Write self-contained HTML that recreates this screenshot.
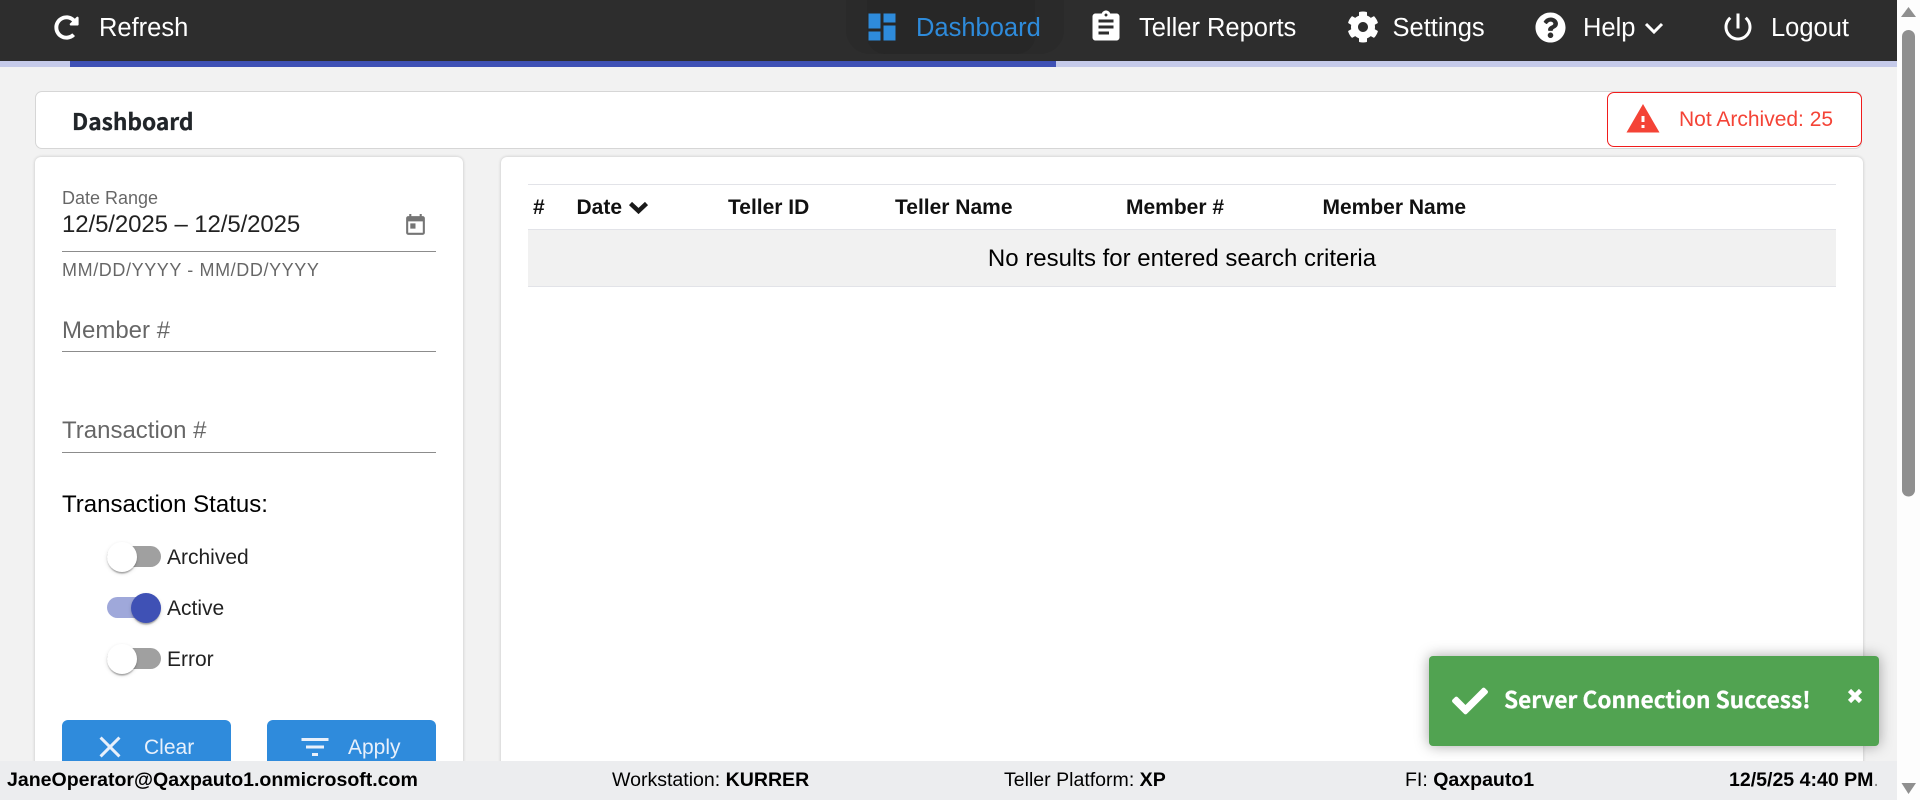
<!DOCTYPE html>
<html lang="en"><head><meta charset="utf-8"><title>Dashboard</title>
<style>
html,body{margin:0;padding:0;width:1920px;height:800px;overflow:hidden;background:#f2f2f2}
body{position:relative;font-family:"Liberation Sans",Arial,sans-serif}
.a{position:absolute}
.t{position:absolute;white-space:nowrap;line-height:normal}
svg{position:absolute;display:block}
.nav{font-size:25.5px;color:#fff;top:14px}
.card{position:absolute;background:#fff;border-radius:6px;box-shadow:0 0 3px rgba(0,0,0,.2)}
.lbl{color:rgba(0,0,0,.6)}
.line{position:absolute;left:62px;width:374px;height:1px;background:#8c8c8c}
.th{font-size:21px;font-weight:700;color:#111;top:196px}
.sw{font-size:21px;color:rgba(0,0,0,.87);left:167px}
.track{position:absolute;left:107px;width:54px;height:21px;border-radius:11px;background:#a0a0a0}
.thumb{position:absolute;width:30px;height:30px;border-radius:50%;background:#fff;box-shadow:0 3px 1.5px -1.5px rgba(0,0,0,.2),0 1.5px 1.5px 0 rgba(0,0,0,.14),0 1.5px 4.5px 0 rgba(0,0,0,.12)}
.btn{position:absolute;top:720px;height:60px;width:169px;background:#2f8bdc;border-radius:6px 6px 0 0}
.bt{font-size:21px;color:#e8f0fb;top:736px}
.ft{font-size:19.55px;color:#000;top:769px}
.ft b{font-weight:700}
</style></head><body>

<!-- nav -->
<div class="a" style="left:0;top:0;width:1897px;height:61px;background:#2d2d2d"></div>
<div class="a" style="left:846px;top:0;width:218px;height:54px;background:#2a2a2a;border-radius:0 0 24px 24px"></div>
<div class="a" style="left:867px;top:0;width:168px;height:54px;background:#272727;border-radius:0 0 18px 18px"></div>

<svg style="left:54px;top:14.5px" width="25" height="25" viewBox="0 0 512 512" fill="#fff"><path d="M256.455 8c66.269.119 126.437 26.233 170.859 68.685l35.715-35.715C478.149 25.851 504 36.559 504 57.941V192c0 13.255-10.745 24-24 24H345.941c-21.382 0-32.09-25.851-16.971-40.971l41.75-41.75c-30.864-28.899-70.801-44.907-113.23-45.273-92.398-.798-170.283 73.977-169.484 169.442C88.764 348.009 162.184 424 256 424c41.127 0 79.997-14.678 110.629-41.556 4.743-4.161 11.906-3.908 16.368.553l39.662 39.662c4.872 4.872 4.631 12.815-.482 17.433C378.202 479.813 319.926 504 256 504 119.034 504 8.001 392.967 8 256.002 7.999 119.193 119.646 7.755 256.455 8z"/></svg>
<div class="t nav" style="left:99px">Refresh</div>

<svg style="left:864px;top:9px" width="36" height="36" viewBox="0 0 24 24" fill="#2e8bdb"><path d="M3 13h8V3H3v10zm0 8h8v-6H3v6zm10 0h8V11h-8v10zm0-18v6h8V3h-8z"/></svg>
<div class="t nav" style="left:916px;color:#2e8bdb">Dashboard</div>

<svg style="left:1088px;top:9px" width="36" height="36" viewBox="0 0 24 24" fill="#fff"><path d="M19 3h-4.18C14.4 1.84 13.3 1 12 1c-1.3 0-2.4.84-2.82 2H5c-1.1 0-2 .9-2 2v14c0 1.1.9 2 2 2h14c1.1 0 2-.9 2-2V5c0-1.1-.9-2-2-2zm-7 0c.55 0 1 .45 1 1s-.45 1-1 1-1-.45-1-1 .45-1 1-1zm2 14H7v-2h7v2zm3-4H7v-2h10v2zm0-4H7V7h10v2z"/></svg>
<div class="t nav" style="left:1139px">Teller Reports</div>

<svg style="left:1346.5px;top:11px" width="32" height="32" viewBox="0 0 512 512" fill="#fff"><path d="M487.4 315.7l-42.6-24.6c4.3-23.2 4.3-47 0-70.2l42.6-24.6c4.9-2.8 7.1-8.6 5.5-14-11.1-35.6-30-67.8-54.7-94.6-3.8-4.1-10-5.1-14.8-2.3L380.8 110c-17.9-15.4-38.5-27.3-60.8-35.1V25.8c0-5.6-3.9-10.5-9.4-11.7-36.7-8.2-74.3-7.8-109.2 0-5.5 1.2-9.4 6.1-9.4 11.7V75c-22.2 7.9-42.8 19.8-60.8 35.1L88.7 85.5c-4.9-2.8-11-1.9-14.8 2.3-24.7 26.7-43.6 58.9-54.7 94.6-1.7 5.4.6 11.2 5.5 14L67.3 221c-4.3 23.2-4.3 47 0 70.2l-42.6 24.6c-4.9 2.8-7.1 8.6-5.5 14 11.1 35.6 30 67.8 54.7 94.6 3.8 4.1 10 5.1 14.8 2.3l42.6-24.6c17.9 15.4 38.5 27.3 60.8 35.1v49.2c0 5.6 3.9 10.5 9.4 11.7 36.7 8.2 74.3 7.8 109.2 0 5.5-1.2 9.4-6.1 9.4-11.7v-49.2c22.2-7.9 42.8-19.8 60.8-35.1l42.6 24.6c4.9 2.8 11 1.9 14.8-2.3 24.7-26.7 43.6-58.9 54.7-94.6 1.5-5.5-.7-11.3-5.6-14.1zM256 336c-44.1 0-80-35.9-80-80s35.9-80 80-80 80 35.9 80 80-35.9 80-80 80z"/></svg>
<div class="t nav" style="left:1392.5px">Settings</div>

<svg style="left:1535px;top:12px" width="31" height="31" viewBox="0 0 512 512" fill="#fff"><path d="M504 256c0 136.997-111.043 248-248 248S8 392.997 8 256C8 119.083 119.043 8 256 8s248 111.083 248 248zM262.655 90c-54.497 0-89.255 22.957-116.549 63.758-3.536 5.286-2.353 12.415 2.715 16.258l34.699 26.31c5.205 3.947 12.621 3.008 16.665-2.122 17.864-22.658 30.113-35.797 57.303-35.797 20.429 0 45.698 13.148 45.698 32.958 0 14.976-12.363 22.667-32.534 33.976C247.128 238.528 216 254.941 216 296v4c0 6.627 5.373 12 12 12h56c6.627 0 12-5.373 12-12v-1.333c0-28.462 83.186-29.647 83.186-106.667 0-58.002-60.165-102-116.531-102zM256 338c-25.365 0-46 20.635-46 46 0 25.364 20.635 46 46 46s46-20.636 46-46c0-25.365-20.635-46-46-46z"/></svg>
<div class="t nav" style="left:1583px">Help</div>
<svg style="left:1644px;top:21px" width="20" height="13" viewBox="0 0 20 13" fill="none" stroke="#fff" stroke-width="3"><path d="M2 3l8 8 8-8"/></svg>

<svg style="left:1720px;top:9px" width="36" height="36" viewBox="0 0 24 24" fill="#fff"><path d="M13 3h-2v10h2V3zm4.83 2.17l-1.42 1.42C17.99 7.86 19 9.81 19 12c0 3.87-3.13 7-7 7s-7-3.13-7-7c0-2.19 1.01-4.14 2.58-5.42L6.17 5.17C4.23 6.82 3 9.26 3 12c0 4.97 4.03 9 9 9s9-4.03 9-9c0-2.74-1.23-5.18-3.17-6.83z"/></svg>
<div class="t nav" style="left:1771px">Logout</div>

<!-- progress -->
<div class="a" style="left:0;top:61px;width:1897px;height:6px;background:#c5cae9"></div>
<div class="a" style="left:70px;top:61px;width:986px;height:6px;background:#3f51b5"></div>

<!-- header card -->
<div class="a" style="left:34.5px;top:91px;width:1825.5px;height:56px;background:#fff;border:1px solid #d6d6d6;border-radius:7px"></div>
<div class="t" style="left:72px;top:107px;font-family:'Noto Sans CJK SC','Liberation Sans',sans-serif;font-weight:700;font-size:22.7px;line-height:28px;color:#212529;-webkit-text-stroke:.3px #212529">Dashboard</div>
<div class="a" style="left:1607px;top:92px;width:253px;height:53px;background:#fff;border:1px solid #f01c1c;border-radius:7px"></div>
<svg style="left:1625px;top:101px" width="36" height="36" viewBox="0 0 24 24" fill="#f44336"><path d="M1 21h22L12 2 1 21zm12-3h-2v-2h2v2zm0-4h-2v-4h2v4z"/></svg>
<div class="t" style="left:1679px;top:108px;font-size:21px;color:#f44336">Not Archived: 25</div>

<!-- filter card -->
<div class="card" style="left:35px;top:157px;width:428px;height:660px"></div>
<div class="t lbl" style="left:62px;top:188px;font-size:18px">Date Range</div>
<div class="t" style="left:62px;top:211px;font-size:24px;letter-spacing:-.1px;color:rgba(0,0,0,.87)">12/5/2025 – 12/5/2025</div>
<svg style="left:403px;top:213px" width="25" height="25" viewBox="0 0 24 24" fill="#757575"><path d="M19 3h-1V1h-2v2H8V1H6v2H5c-1.11 0-1.99.9-1.99 2L3 19c0 1.1.89 2 2 2h14c1.1 0 2-.9 2-2V5c0-1.1-.9-2-2-2zm0 16H5V8h14v11zM7 10h5v5H7z"/></svg>
<div class="line" style="top:251px"></div>
<div class="t lbl" style="left:62px;top:260px;font-size:18px;letter-spacing:.6px">MM/DD/YYYY - MM/DD/YYYY</div>
<div class="t lbl" style="left:62px;top:317px;font-size:24px">Member #</div>
<div class="line" style="top:351px"></div>
<div class="t lbl" style="left:62px;top:417px;font-size:24px">Transaction #</div>
<div class="line" style="top:452px"></div>
<div class="t" style="left:62px;top:491px;font-size:24px;color:#000">Transaction Status:</div>

<div class="track" style="top:546px"></div><div class="thumb" style="left:107px;top:542px"></div>
<div class="t sw" style="top:546px">Archived</div>
<div class="track" style="top:597px;background:#9fa8da"></div><div class="thumb" style="left:131px;top:593px;background:#3f51b5"></div>
<div class="t sw" style="top:597px">Active</div>
<div class="track" style="top:648px"></div><div class="thumb" style="left:107px;top:644px"></div>
<div class="t sw" style="top:648px">Error</div>

<div class="btn" style="left:62px"></div>
<svg style="left:92px;top:729px" width="36" height="36" viewBox="0 0 24 24" fill="#e8f0fb"><path d="M19 6.41L17.59 5 12 10.59 6.41 5 5 6.41 10.59 12 5 17.59 6.41 19 12 13.41 17.59 19 19 17.59 13.41 12z"/></svg>
<div class="t bt" style="left:144px">Clear</div>
<div class="btn" style="left:267px"></div>
<svg style="left:297px;top:729px" width="36" height="36" viewBox="0 0 24 24" fill="#e8f0fb"><path d="M10 18h4v-2h-4v2zM3 6v2h18V6H3zm3 7h12v-2H6v2z"/></svg>
<div class="t bt" style="left:348px">Apply</div>

<!-- table card -->
<div class="card" style="left:501px;top:157px;width:1362px;height:660px"></div>
<div class="a" style="left:528px;top:184px;width:1308px;height:1px;background:#e2e3e8"></div>
<div class="t th" style="left:533px">#</div>
<div class="t th" style="left:576.5px">Date</div>
<svg style="left:628px;top:200px" width="21" height="16" viewBox="0 0 21 16" fill="none" stroke="#1a1a1a" stroke-width="4.5"><path d="M2.5 3.5l8 7.5 8-7.5"/></svg>
<div class="t th" style="left:728px">Teller ID</div>
<div class="t th" style="left:895px">Teller Name</div>
<div class="t th" style="left:1126px">Member #</div>
<div class="t th" style="left:1322.5px">Member Name</div>
<div class="a" style="left:528px;top:229px;width:1308px;height:58px;background:#f1f1f1;border-top:1px solid #e2e3e8;border-bottom:1px solid #e2e3e8;box-sizing:border-box"></div>
<div class="t" style="left:528px;width:1308px;text-align:center;top:245px;font-size:24px;color:#000">No results for entered search criteria</div>

<!-- footer -->
<div class="a" style="left:0;top:761px;width:1897px;height:39px;background:#ecedef"></div>
<div class="t ft" style="left:7px"><b>JaneOperator@Qaxpauto1.onmicrosoft.com</b></div>
<div class="t ft" style="left:612px">Workstation: <b>KURRER</b></div>
<div class="t ft" style="left:1004px">Teller Platform: <b>XP</b></div>
<div class="t ft" style="left:1405px">FI: <b>Qaxpauto1</b></div>
<div class="t ft" style="left:1729px;width:151px;overflow:hidden"><b>12/5/25 4:40 PM</b><span style="color:#888">.</span></div>

<!-- toast -->
<div class="a" style="left:1429px;top:656px;width:450px;height:90px;background:#51a351;border-radius:4px;box-shadow:0 0 14px rgba(0,0,0,.35)"></div>
<svg style="left:1452px;top:683px" width="36" height="36" viewBox="0 0 512 512" fill="#fff"><path d="M173.898 439.404l-166.4-166.4c-9.997-9.997-9.997-26.206 0-36.204l36.203-36.204c9.997-9.998 26.207-9.998 36.204 0L192 312.69 432.095 72.596c9.997-9.997 26.207-9.997 36.204 0l36.203 36.204c9.997 9.997 9.997 26.206 0 36.204l-294.4 294.401c-9.998 9.997-26.207 9.997-36.204-.001z"/></svg>
<div class="t" style="left:1504px;top:683px;font-family:'Noto Sans CJK SC','Liberation Sans',sans-serif;font-weight:700;font-size:22.65px;line-height:32px;color:#fff;-webkit-text-stroke:.25px #fff">Server Connection Success!</div>
<svg style="left:1846px;top:687px" width="18" height="18" viewBox="0 0 18 18" fill="none" stroke="#fff" stroke-width="4.5"><path d="M3.5 3.5l11 11M14.5 3.5l-11 11"/></svg>

<!-- scrollbar -->
<div class="a" style="left:1897px;top:0;width:23px;height:800px;background:#fdfdfd"></div>
<svg style="left:1897px;top:0" width="23" height="800" viewBox="0 0 23 800" fill="#8f8f8f"><path d="M11.5 7L19 17H4z"/><path d="M5 36.5a6.5 6.5 0 0 1 13 0V490a6.5 6.5 0 0 1-13 0z"/><path d="M4.5 783H19L11.5 794z"/></svg>

</body></html>
